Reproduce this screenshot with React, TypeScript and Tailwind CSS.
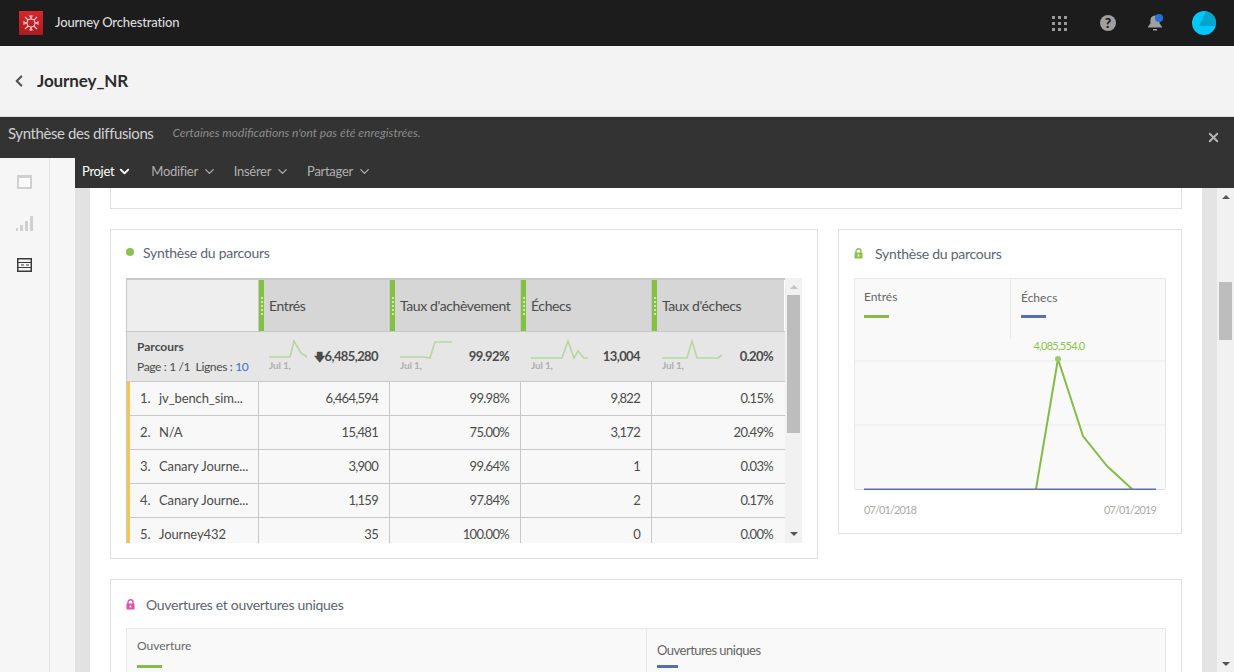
import { ChevronDown, ChevronLeft, X } from "lucide-react";

const font = "font-['Lato','Liberation_Sans',sans-serif]";

const columns = ["Entrés", "Taux d'achèvement", "Échecs", "Taux d'échecs"];

const totals = [
  { value: "6,485,280", arrow: true, points: "0,25 21,25 25,9 32,21 38,25" },
  { value: "99.92%", arrow: false, points: "0,25 23,25 30,26 35,10 52,10" },
  { value: "13,004", arrow: false, points: "0,26 31,26 37,9 43,26 47,19 53,26 57,26" },
  { value: "0.20%", arrow: false, points: "0,26 25,26 30,9 35,26 56,26 60,23" },
];

const rows = [
  ["1.", "jv_bench_sim...", "6,464,594", "99.98%", "9,822", "0.15%"],
  ["2.", "N/A", "15,481", "75.00%", "3,172", "20.49%"],
  ["3.", "Canary Journe...", "3,900", "99.64%", "1", "0.03%"],
  ["4.", "Canary Journe...", "1,159", "97.84%", "2", "0.17%"],
  ["5.", "Journey432", "35", "100.00%", "0", "0.00%"],
];

function Lock({ color }: { color: string }) {
  return (
    <svg width="9" height="11" viewBox="0 0 9 11" className="shrink-0">
      <path d="M2 5V3.2a2.5 2.5 0 0 1 5 0V5" fill="none" stroke={color} strokeWidth="1.4" />
      <rect x="0.5" y="4.5" width="8" height="6" rx="0.5" fill={color} />
      <rect x="3.7" y="6.5" width="1.6" height="2" fill="#fff" />
    </svg>
  );
}

function Logo() {
  return (
    <div className="flex h-6 w-6 items-center justify-center bg-gradient-to-b from-[#d8262c] to-[#a81c22]">
      <svg width="18" height="18" viewBox="0 0 18 18" stroke="#f6dada" strokeWidth="1.1" fill="none">
        <path d="M9 1v4M9 13v4M1 9h4M13 9h4M3 3l3.2 3.2M11.8 11.8L15 15M15 3l-3.2 3.2M6.2 11.8L3 15" />
        <path d="M7 1.5L9 3.5l2-2M7 16.5l2-2 2 2M1.5 7l2 2-2 2M16.5 7l-2 2 2 2" strokeWidth="0.9" />
        <circle cx="9" cy="9" r="4" />
      </svg>
    </div>
  );
}

function TopBar() {
  return (
    <header className="flex h-[46px] shrink-0 items-center bg-[#1c1c1c] pl-[19px] pr-[18px]">
      <Logo />
      <span className="ml-3 text-[13px] font-medium tracking-[-0.15px] text-[#dcdcdc]">Journey Orchestration</span>
      <div className="ml-auto flex items-center">
        <div className="grid grid-cols-3 gap-[3px]">
          {Array.from({ length: 9 }).map((_, i) => (
            <span key={i} className="h-[3px] w-[3px] bg-[#9a9a9a]" />
          ))}
        </div>
        <div className="ml-[33px] flex h-4 w-4 items-center justify-center rounded-full bg-[#a0a0a0] text-[14px] font-black leading-none text-[#1c1c1c]">
          ?
        </div>
        <svg width="16" height="18" viewBox="0 0 16 18" className="ml-[31px]">
          <path d="M8 1.5c-3 0-4.6 2.2-4.6 5v3L1 12.8v.7h14v-.7l-2.4-3.3v-3c0-2.8-1.6-5-4.6-5z" fill="#a0a0a0" />
          <rect x="6" y="15" width="4" height="1.5" fill="#a0a0a0" />
          <circle cx="12" cy="4" r="4" fill="#1f73e0" />
        </svg>
        <svg width="24" height="24" viewBox="0 0 24 24" className="ml-[29px]">
          <circle cx="12" cy="12" r="12" fill="#00c8ff" />
          <path d="M7 15L14 .2a12 12 0 0 1 9.8 14.8z" fill="#00a5cc" />
        </svg>
      </div>
    </header>
  );
}

function Breadcrumb() {
  return (
    <div className="flex h-[71px] shrink-0 items-center border-b border-[#e0e0e0] bg-[#f3f3f3] pl-[10px]">
      <ChevronLeft size={18} strokeWidth={3} className="text-[#555]" />
      <span className="ml-[9px] text-[17px] font-bold tracking-[-0.1px] text-[#2c2c2c]">Journey_NR</span>
    </div>
  );
}

function Sidebar() {
  return (
    <aside className="flex w-[75px] shrink-0 bg-[#f6f6f6]">
      <div className="flex w-[50px] flex-col items-center border-r border-[#e2e2e2] pt-[17px]">
        <div className="h-[14px] w-[15px] border-2 border-t-[3px] border-[#d0d0d0] bg-[#fafafa]" />
        <div className="mt-[27px] flex h-[15px] items-end gap-[2px]">
          <span className="h-[3px] w-[2px] bg-[#d0d0d0]" />
          <span className="h-[6px] w-[3px] bg-[#d0d0d0]" />
          <span className="h-[10px] w-[3px] bg-[#d0d0d0]" />
          <span className="h-[15px] w-[3px] bg-[#d0d0d0]" />
        </div>
        <svg width="15" height="14" viewBox="0 0 15 14" className="mt-[27px]" fill="none" stroke="#3a3a3a">
          <rect x="0.75" y="0.75" width="13.5" height="12.5" strokeWidth="1.5" />
          <path d="M1 4.5h13M1 9.5h13M4 7h3M9 7h3" strokeWidth="1.2" />
        </svg>
      </div>
    </aside>
  );
}

function Menu() {
  const items = [
    { label: "Projet", cls: "text-white gap-[3px]", gap: "mr-[19px]" },
    { label: "Modifier", cls: "text-[#b0b0b0] gap-[4px]", gap: "mr-[17px]" },
    { label: "Insérer", cls: "text-[#b0b0b0] gap-[4px]", gap: "mr-[17px]" },
    { label: "Partager", cls: "text-[#b0b0b0] gap-[4px]", gap: "" },
  ];
  return (
    <nav className="flex h-[30px] shrink-0 items-center bg-[#333] pb-[3px] pl-[7px]">
      {items.map((m) => (
        <div key={m.label} className={`flex items-center text-[13px] tracking-[-0.3px] ${m.cls} ${m.gap}`}>
          {m.label}
          <ChevronDown size={15} strokeWidth={m.label === "Projet" ? 3 : 2} />
        </div>
      ))}
    </nav>
  );
}

function Spark({ points }: { points: string }) {
  return (
    <div className="relative h-[38px] w-[40px] shrink-0">
      <svg width="60" height="32" viewBox="0 0 60 32" className="block overflow-visible">
        <polyline points={points} fill="none" stroke="#b7d79d" strokeWidth="1.6" />
      </svg>
      <span className="absolute left-0 top-[26px] text-[10px] font-bold tracking-[-0.2px] text-[#b0b0b0]">Jul 1,</span>
    </div>
  );
}

function JourneyTable() {
  const grid = "grid grid-cols-[131px_131px_131px_131px_133px]";
  return (
    <div className="flex h-[265px] w-[676px] overflow-hidden">
      <div className="w-[659px] shrink-0 border-l border-t-2 border-[#c8c8c8] text-[13px] text-[#4b4b4b]">
        <div className={`${grid} h-[52px] border-b border-[#c8c8c8]`}>
          <div className="bg-[#eeeeee]" />
          {columns.map((c) => (
            <div key={c} className="flex items-center border-l border-[#c8c8c8] bg-[#d6d6d6]">
              <div className="flex h-full w-[5px] shrink-0 flex-col items-center justify-center gap-[2px] bg-[#84c13f]">
                {[0, 1, 2, 3, 4].map((d) => (
                  <span key={d} className="h-[2px] w-[2px] rounded-full bg-[#e6f3d8]" />
                ))}
              </div>
              <span className="ml-[5px] whitespace-nowrap text-[14px] tracking-[-0.4px]">{c}</span>
            </div>
          ))}
        </div>
        <div className={`${grid} h-[50px] border-b border-[#c8c8c8] bg-[#e6e6e6]`}>
          <div className="pl-[10px] pt-[5px] leading-[20px]">
            <div className="text-[12px] font-bold">Parcours</div>
            <div className="text-[12px] tracking-[-0.35px]">
              Page : 1 /1&nbsp; Lignes : <span className="text-[#3f6fc4]">10</span>
            </div>
          </div>
          {totals.map((t) => (
            <div key={t.value} className="flex items-start justify-between pl-[11px] pr-[11px]">
              <Spark points={t.points} />
              <span className="mt-[18px] flex items-center text-[13px] font-bold leading-none tracking-[-0.6px]">
                {t.arrow && <span className="text-[11px]">🡇</span>}
                {t.value}
              </span>
            </div>
          ))}
        </div>
        {rows.map((r) => (
          <div key={r[0]} className={`${grid} h-[34px] border-b border-[#c8c8c8] bg-[#f8f8f8]`}>
            <div className="flex items-center border-l-[3px] border-[#f6c44f] pl-[10px] tracking-[-0.1px]">
              <span className="w-[19px]">{r[0]}</span>
              <span className="whitespace-nowrap">{r[1]}</span>
            </div>
            {r.slice(2).map((v, i) => (
              <div key={i} className="flex items-center justify-end border-l border-[#c8c8c8] pr-[11px] tracking-[-0.7px]">
                {v}
              </div>
            ))}
          </div>
        ))}
      </div>
      <div className="flex w-[17px] shrink-0 flex-col items-center bg-[#f1f1f1] pt-[7px]">
        <span className="h-0 w-0 border-x-[4px] border-b-[4px] border-x-transparent border-b-[#c4c4c4]" />
        <span className="mt-[6px] h-[138px] w-[13px] shrink-0 bg-[#bdbdbd]" />
        <span className="mt-[99px] h-0 w-0 border-x-[4px] border-t-[4px] border-x-transparent border-t-[#555]" />
      </div>
    </div>
  );
}

function SummaryChart() {
  return (
    <div className="h-[211px] w-[312px] border border-b-0 border-[#e8e8e8] bg-[#f9f9f9]">
      <div className="flex h-[60px]">
        <div className="w-[156px] border-r border-[#e8e8e8] pl-[9px] pt-[9px] text-[12px] text-[#666]">
          Entrés
          <div className="mt-[9px] h-[3px] w-[25px] bg-[#86bb4c]" />
        </div>
        <div className="pl-[10px] pt-[10px] text-[12px] text-[#666]">
          Échecs
          <div className="mt-[8px] h-[3px] w-[25px] bg-[#5a6eab]" />
        </div>
      </div>
      <svg width="310" height="151" viewBox="0 0 310 151" className="block">
        <path d="M0 22h310M0 86h310" stroke="#f0f0f0" strokeWidth="1.5" />
        <path d="M0 150.5h310" stroke="#dcdcdc" />
        <polyline points="181,150 203,20 228,97 252,127 277,150" fill="none" stroke="#86bb4c" strokeWidth="2" />
        <circle cx="203" cy="20" r="3" fill="#9ccb6b" />
        <text x="204" y="11" textAnchor="middle" fontSize="11" letterSpacing="-0.7" fill="#8cc152">
          4,085,554.0
        </text>
        <path d="M9 150.5h292" stroke="#5a6eab" strokeWidth="2" />
      </svg>
    </div>
  );
}

function Content() {
  return (
    <main className="h-full w-[1112px] shrink-0 overflow-hidden bg-white px-5">
      <div className="h-[21px] border-x border-b border-[#e0e0e0]" />
      <div className="mt-5 flex items-start gap-5">
        <section className="h-[330px] w-[708px] shrink-0 border border-[#e0e0e0] px-[15px] pt-[13px]">
          <div className="flex h-[18px] items-center gap-[9px] text-[14px] tracking-[-0.25px] text-[#5c6470]">
            <span className="h-2 w-2 rounded-full bg-[#8cc152]" />
            Synthèse du parcours
          </div>
          <div className="mt-[17px]">
            <JourneyTable />
          </div>
        </section>
        <section className="h-[305px] w-[344px] shrink-0 border border-[#e0e0e0] px-[15px] pt-[14px]">
          <div className="flex h-[18px] items-center gap-3 text-[14px] tracking-[-0.25px] text-[#5c6470]">
            <Lock color="#8cc152" />
            Synthèse du parcours
          </div>
          <div className="mt-[16px]">
            <SummaryChart />
          </div>
          <div className="mt-[13px] flex justify-between px-[10px] text-[11px] tracking-[-0.9px] text-[#aaa]">
            <span>07/01/2018</span>
            <span>07/01/2019</span>
          </div>
        </section>
      </div>
      <section className="mt-5 border border-[#e0e0e0] px-[15px] pt-[15px]">
        <div className="flex h-[18px] items-center gap-[11px] text-[14px] tracking-[-0.3px] text-[#5c6470]">
          <Lock color="#e052a8" />
          Ouvertures et ouvertures uniques
        </div>
        <div className="mt-[15px] flex h-[60px] border border-[#e8e8e8] bg-[#f9f9f9]">
          <div className="w-[520px] border-r border-[#e8e8e8] pl-[10px] pt-[8px] text-[12px] text-[#666]">
            Ouverture
            <div className="mt-[10px] h-[3px] w-[25px] bg-[#86bb4c]" />
          </div>
          <div className="pl-[10px] pt-[12px] text-[13px] leading-[18px] tracking-[-0.5px] text-[#666]">
            Ouvertures uniques
            <div className="mt-[6px] h-[3px] w-[21px] bg-[#5a6eab]" />
          </div>
        </div>
      </section>
    </main>
  );
}

function PageScrollbar() {
  return (
    <div className="flex w-[17px] shrink-0 flex-col items-center bg-[#f1f1f1] pt-[7px]">
      <span className="h-0 w-0 border-x-[4px] border-b-[4px] border-x-transparent border-b-[#555]" />
      <span className="mt-[83px] h-[58px] w-[13px] shrink-0 bg-[#bdbdbd]" />
      <span className="mt-auto mb-[6px] h-0 w-0 border-x-[4px] border-t-[4px] border-x-transparent border-t-[#555]" />
    </div>
  );
}

export default function App() {
  return (
    <div className={`flex h-[672px] w-[1234px] flex-col overflow-hidden ${font}`}>
      <TopBar />
      <Breadcrumb />
      <div className="flex h-[41px] shrink-0 items-center bg-[#333] pl-2 pr-[13px]">
        <div className="flex items-center pb-[9px]">
          <span className="text-[15px] tracking-[-0.4px] text-[#d0d0d0]">Synthèse des diffusions</span>
          <span className="ml-[19px] text-[12px] italic text-[#8c8c8c]">
            Certaines modifications n'ont pas été enregistrées.
          </span>
        </div>
        <X size={15} strokeWidth={3} className="ml-auto text-[#b5b5b5]" />
      </div>
      <div className="flex min-h-0 flex-1">
        <Sidebar />
        <div className="flex min-w-0 flex-1 flex-col">
          <Menu />
          <div className="flex min-h-0 flex-1">
            <div className="w-[15px] shrink-0 bg-[#e2e2e2]" />
            <Content />
            <div className="w-[15px] shrink-0 bg-[#e4e4e4]" />
            <PageScrollbar />
          </div>
        </div>
      </div>
    </div>
  );
}
